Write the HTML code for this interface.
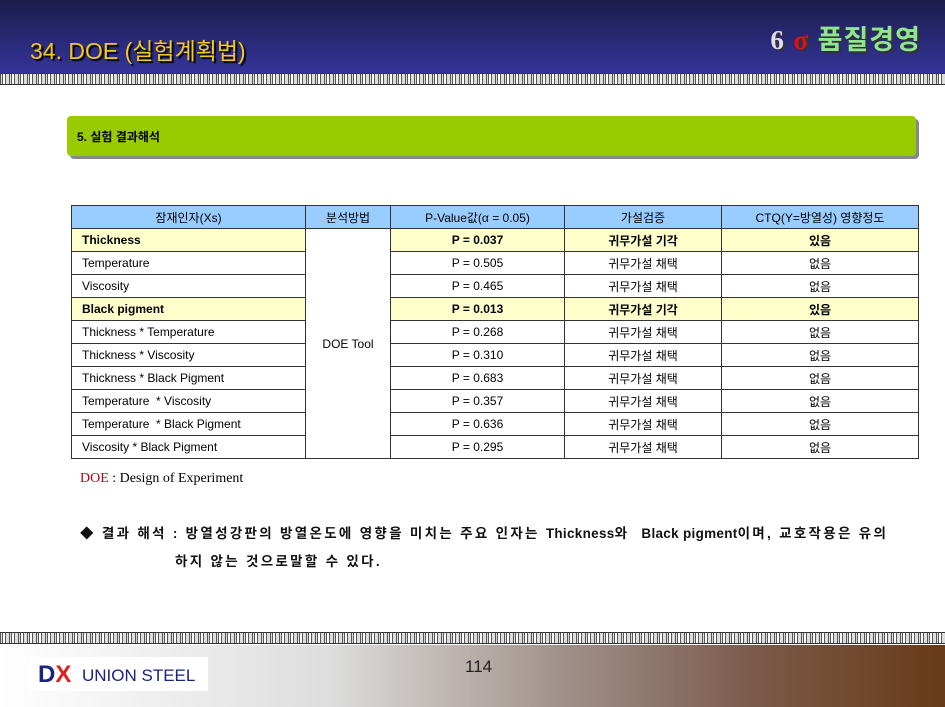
<!DOCTYPE html>
<html><head><meta charset="utf-8"><style>
body{margin:0;width:945px;height:707px;position:relative;overflow:hidden;background:#fff;font-family:"Liberation Sans","Noto Sans CJK KR",sans-serif}
.top{position:absolute;left:0;top:0;width:945px;height:73px;background:linear-gradient(#1c1c4c,#34349a)}
.pat{position:absolute;left:0;width:945px;height:10px;background:repeating-linear-gradient(90deg,#555 0 1px,#ddd 1px 2px,#555 2px 3px,#fff 3px 5px,#555 5px 6px,#ddd 6px 9px);border-top:1px solid #333;border-bottom:1px solid #333}
.t1{position:absolute;left:30px;top:32px;font-size:23px;color:#f4c81c;text-shadow:2px 2px 1px #000}
.t2{position:absolute;right:24px;top:18px;font-size:27px;font-weight:bold;color:#8ee68e;text-shadow:2px 2px 1px #333;letter-spacing:1px}
.green{position:absolute;left:67px;top:116px;width:849px;height:40px;background:#99cc00;border-radius:4px;box-shadow:3px 3px 0 #888}
.green span{position:absolute;left:10px;top:12px;font-size:12px;font-weight:bold}
table{position:absolute;left:71px;top:205px;border-collapse:collapse;font-size:12px}
td{border:1px solid #333;height:22px;padding:0;text-align:center}
td.l{text-align:left;padding-left:10px}
tr.h td{background:#99ccff}
tr.y td{background:#ffffcc;font-weight:bold}
.doe{position:absolute;left:80px;top:471px;font-family:"Liberation Serif",serif;font-size:14px}
.res{position:absolute;left:80px;top:520px;font-size:13.5px;font-weight:bold;line-height:28px;color:#111;letter-spacing:2.3px;white-space:nowrap}
.res b{letter-spacing:0.3px}
.bot{position:absolute;left:0;top:645px;width:945px;height:62px;background:linear-gradient(90deg,#fff,#ddd 35%,#a08f88 60%,#7a5a4a 80%,#683a16)}
.logo{position:absolute;left:30px;top:657px;width:178px;height:34px;background:#fff}
</style></head><body>
<div class="top"></div>
<div class="t1">34. DOE (실험계획법)</div>
<div class="t2"><span style="font-family:'Liberation Serif',serif;color:#dde">6</span> <span style="color:#e01010;font-family:'Liberation Serif',serif">σ</span> 품질경영</div>
<div class="pat" style="top:73px"></div>
<div class="green"><span>5. 실험 결과해석</span></div>
<table>
<colgroup><col style="width:234px"><col style="width:85px"><col style="width:174px"><col style="width:157px"><col style="width:197px"></colgroup>
<tr class="h"><td>잠재인자(Xs)</td><td>분석방법</td><td>P-Value값(α = 0.05)</td><td>가설검증</td><td>CTQ(Y=방열성) 영향정도</td></tr>
<tr class="y"><td class="l">Thickness</td><td rowspan="10" style="background:#fff;font-weight:normal">DOE Tool</td><td>P = 0.037</td><td>귀무가설 기각</td><td>있음</td></tr>
<tr><td class="l">Temperature</td><td>P = 0.505</td><td>귀무가설 채택</td><td>없음</td></tr>
<tr><td class="l">Viscosity</td><td>P = 0.465</td><td>귀무가설 채택</td><td>없음</td></tr>
<tr class="y"><td class="l">Black pigment</td><td>P = 0.013</td><td>귀무가설 기각</td><td>있음</td></tr>
<tr><td class="l">Thickness * Temperature</td><td>P = 0.268</td><td>귀무가설 채택</td><td>없음</td></tr>
<tr><td class="l">Thickness * Viscosity</td><td>P = 0.310</td><td>귀무가설 채택</td><td>없음</td></tr>
<tr><td class="l">Thickness * Black Pigment</td><td>P = 0.683</td><td>귀무가설 채택</td><td>없음</td></tr>
<tr><td class="l">Temperature &nbsp;* Viscosity</td><td>P = 0.357</td><td>귀무가설 채택</td><td>없음</td></tr>
<tr><td class="l">Temperature &nbsp;* Black Pigment</td><td>P = 0.636</td><td>귀무가설 채택</td><td>없음</td></tr>
<tr><td class="l">Viscosity * Black Pigment</td><td>P = 0.295</td><td>귀무가설 채택</td><td>없음</td></tr>
</table>
<div class="doe"><span style="color:#c00020">DOE</span> : Design of Experiment</div>
<div class="res">◆ 결과 해석 : 방열성강판의 방열온도에 영향을 미치는 주요 인자는 <b>Thickness</b>와 &nbsp;<b>Black pigment</b>이며, 교호작용은 유의<br><span style="padding-left:95px">하지 않는 것으로말할 수 있다.</span></div>
<div class="pat" style="top:632px"></div>
<div class="bot"></div>
<div class="logo"><span style="position:absolute;left:8px;top:4px;font-size:24px;font-weight:bold;color:#1a237e">D<span style="color:#e02020">X</span></span><span style="position:absolute;left:52px;top:9px;font-size:17px;color:#1a237e">UNION STEEL</span></div>
<div style="position:absolute;left:465px;top:657px;font-size:17px;color:#222">114</div>
</body></html>
